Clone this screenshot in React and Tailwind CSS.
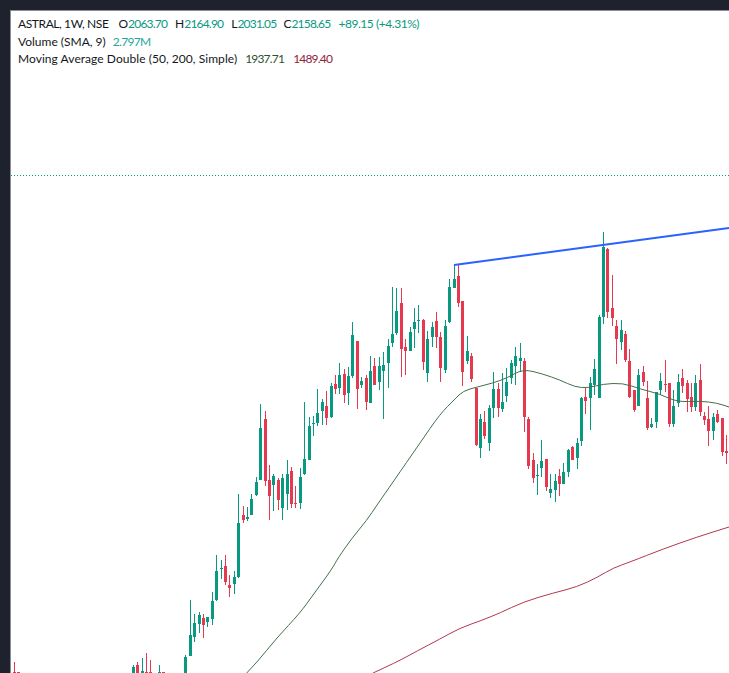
import React from 'react';

// x, wick top, wick bottom, body top, body bottom
const green = [
  [133,665,673,667,673],[142,658,673,671,673],[159,665,673,672,673],[185,655,673,657,673],[190,600,656,635,656],
  [194,614,642,623,637],[199,612,633,615,624],[207,617,627,617,622],[212,592,625,601,619],[216,555,601,571,600],
  [221,560,579,568,569],[234,571,594,577,584],[238,494,578,523,577],[247,507,521,517,519],[251,494,515,499,515],
  [256,477,496,482,495],[260,404,480,428,480],[273,474,511,476,485],[282,474,520,478,508],[287,460,510,474,494],
  [300,468,509,477,503],[304,402,475,459,474],[309,417,460,426,460],[313,416,436,423,424],[317,389,426,413,423],
  [322,399,425,402,411],[331,383,418,386,417],[339,363,394,375,388],[348,367,405,376,393],[352,322,378,335,376],
  [361,377,388,381,385],[370,356,403,371,403],[379,357,390,366,382],[383,352,419,365,371],[388,339,388,346,363],
  [392,287,347,334,343],[396,288,335,311,333],[410,327,351,332,351],[414,308,348,322,329],[418,305,333,320,321],
  [427,331,382,339,373],[432,322,347,327,337],[445,320,373,326,370],[449,279,323,287,322],[454,265,288,279,288],
  [467,336,364,351,361],[480,414,458,419,448],[489,405,451,408,443],[493,372,418,389,408],[502,373,412,402,409],
  [506,368,402,382,396],[511,360,384,363,378],[515,347,385,356,366],[520,343,372,358,361],[537,464,495,475,476],
  [541,440,477,461,468],[550,474,498,489,493],[555,474,502,481,490],[563,463,484,472,484],[568,449,477,450,472],
  [577,438,469,443,458],[581,397,446,398,441],[590,377,430,383,398],[594,359,395,369,385],[599,315,398,317,398],
  [603,232,324,247,317],[621,320,350,330,342],[638,369,406,375,406],[651,418,428,424,427],[656,392,428,392,422],
  [660,373,395,381,390],[673,390,427,406,424],[678,374,407,382,403],[695,375,411,383,407],[713,413,440,417,431],
];

const red = [
  [14,662,673,672,673],[18,672,673,672,673],[137,662,673,665,673],[146,653,673,672,673],[150,660,673,672,673],
  [163,672,673,672,673],[203,614,638,618,625],[225,555,585,566,582],[229,575,597,585,588],[243,506,523,515,520],
  [265,411,486,419,481],[269,465,520,480,496],[278,478,510,480,500],[291,467,508,471,504],[295,486,508,503,504],
  [326,391,425,406,418],[335,375,394,384,389],[344,369,403,374,395],[357,341,409,341,389],[366,375,410,378,402],
  [374,358,385,366,385],[401,288,377,303,349],[405,339,375,347,351],[423,319,370,320,362],[436,312,348,321,337],
  [440,332,382,337,368],[458,264,307,276,303],[462,301,386,301,372],[471,353,382,356,379],[476,388,446,388,445],
  [484,411,439,422,436],[498,383,417,389,408],[524,358,432,361,417],[528,417,469,419,466],[533,453,483,460,478],
  [546,459,491,459,487],[559,469,496,476,484],[572,446,460,447,460],[585,388,414,397,401],[607,248,318,249,312],
  [612,275,326,308,318],[616,320,364,326,339],[625,331,362,334,360],[629,349,398,361,397],[634,390,412,390,410],
  [643,366,386,372,382],[647,381,430,398,428],[665,360,392,384,385],[669,383,427,383,424],[682,369,393,378,386],
  [687,380,412,383,399],[691,383,412,397,407],[700,364,416,380,412],[704,412,425,416,420],[708,406,446,419,431],
  [717,410,423,414,422],[722,418,456,418,452],[726,435,464,451,453],
];

const ma50 = [[246.7,673],[256.7,662.7],[276.7,638],[300,613],[313,595],[332,569],[338,558],[352,538],[367,520],[377,505],[393,482],[420,443],[440,414],[455,399],[463,391],[477,387],[493,383],[507,378],[523,369],[543,374],[560,380],[575,387],[588,388],[603,384],[623,383],[640,389],[660,394],[677,402],[700,401],[717,403],[729,407]];
const ma200 = [[373,673],[397,662],[417,651],[440,639],[460,628],[480,621],[500,613],[523,602],[553,593],[577,587],[598,577],[613,568],[630,562],[663,549],[697,537],[729,527]];

// quadratic through the midpoints so the averages don't look kinked
function smooth(pts) {
  let d = `M${pts[0][0]} ${pts[0][1]}`;
  for (let i = 1; i < pts.length - 1; i++) {
    const mx = (pts[i][0] + pts[i + 1][0]) / 2;
    const my = (pts[i][1] + pts[i + 1][1]) / 2;
    d += ` Q${pts[i][0]} ${pts[i][1]} ${mx} ${my}`;
  }
  const last = pts[pts.length - 1];
  return d + ` L${last[0]} ${last[1]}`;
}

function Candles({ rows, color }) {
  return (
    <g fill={color} shapeRendering="crispEdges">
      {rows.map(([x, wt, wb, bt, bb]) => (
        <g key={x}>
          <rect x={x} y={wt} width="1" height={wb - wt} />
          <rect x={x - 1} y={bt} width="3" height={Math.max(bb - bt, 1)} />
        </g>
      ))}
    </g>
  );
}

function Chart() {
  return (
    <svg className="absolute left-0 top-0" width="729" height="673" viewBox="0 0 729 673">
      <line x1="11" y1="175.5" x2="729" y2="175.5" stroke="#089981" strokeWidth="1" strokeDasharray="1 2" shapeRendering="crispEdges" />
      <Candles rows={green} color="#089981" />
      <Candles rows={red} color="#e63950" />
      <path d={smooth(ma50)} fill="none" stroke="#43704a" strokeWidth="1" />
      <path d={smooth(ma200)} fill="none" stroke="#b2384f" strokeWidth="1" />
      <line x1="454" y1="265" x2="729" y2="228" stroke="#2962ff" strokeWidth="2" />
    </svg>
  );
}

function Val({ children }) {
  return <span className="text-[#089981] tracking-[-0.8px]">{children}</span>;
}

export default function App() {
  return (
    <div className="w-[729px] h-[673px] overflow-hidden bg-[#1e222d] pl-[10px] pt-[10px]">
      <div className="relative h-full border-l border-t border-[#8a8d94] bg-white">
        <div className="absolute -left-[11px] -top-[11px] w-[729px] h-[673px]">
          <Chart />
        </div>
        <div className="relative pl-[7px] pt-[4px] text-[12px] leading-[17.5px] text-[#131722] font-['Lato','Open_Sans',sans-serif]">
          <div className="flex">
            <span className="tracking-[-0.4px]">ASTRAL, 1W, NSE</span>
            <span className="ml-[10px]">O<Val>2063.70</Val></span>
            <span className="ml-[8px]">H<Val>2164.90</Val></span>
            <span className="ml-[8px]">L<Val>2031.05</Val></span>
            <span className="ml-[7px]">C<Val>2158.65</Val></span>
            <span className="ml-[8px] text-[#089981] tracking-[-0.45px]">+89.15 (+4.31%)</span>
          </div>
          <div className="flex">
            <span>Volume (SMA, 9)</span>
            <span className="ml-[7px] text-[#26a69a] tracking-[-0.7px]">2.797M</span>
          </div>
          <div className="flex">
            <span className="tracking-[0.05px]">Moving Average Double (50, 200, Simple)</span>
            <span className="ml-[8px] text-[#2b5232] tracking-[-0.8px]">1937.71</span>
            <span className="ml-[9px] text-[#8f2438] tracking-[-0.8px]">1489.40</span>
          </div>
        </div>
      </div>
    </div>
  );
}
